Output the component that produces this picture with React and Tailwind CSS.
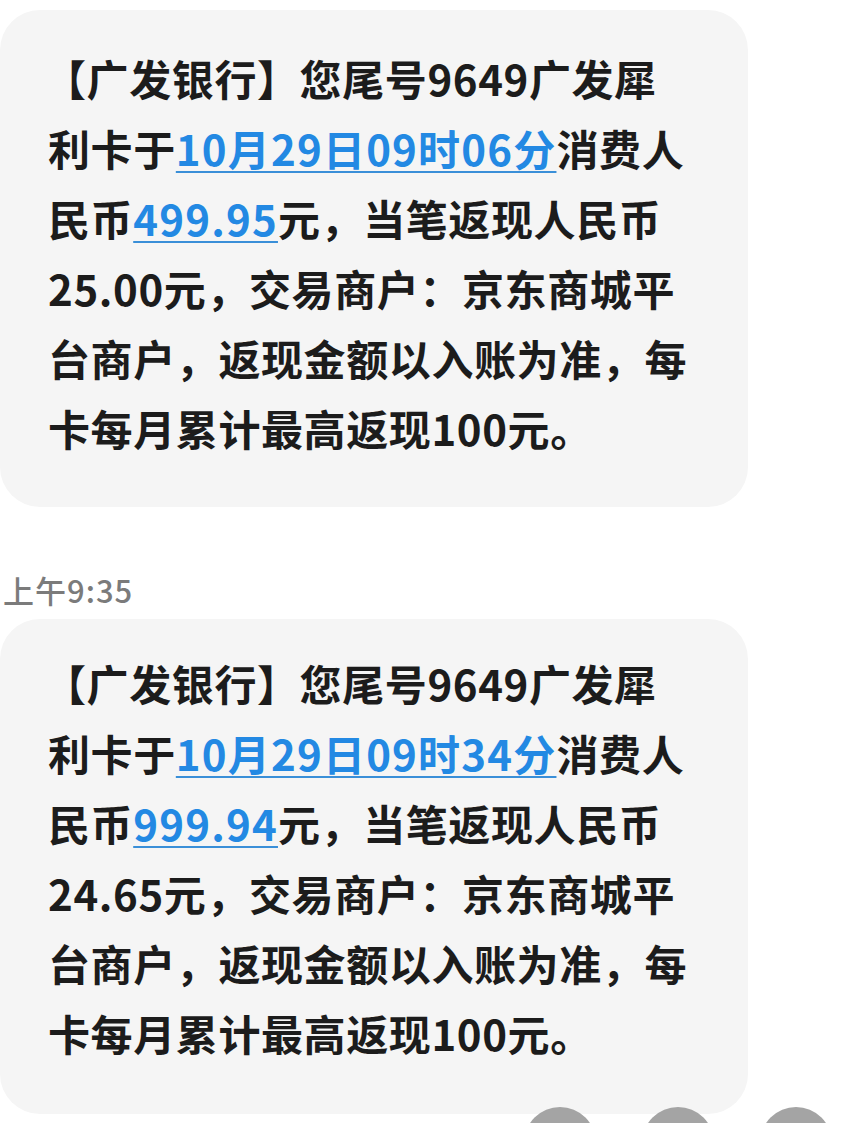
const FONT = "font-['Noto_Sans_CJK_SC','Noto_Sans',sans-serif]";

const messages = [
  {
    time: null,
    pad: "pt-[33px] pb-[44px]",
    date: "10月29日09时06分",
    amount: "499.95",
    cashback: "25.00",
  },
  {
    time: "上午9:35",
    pad: "pt-[29px] pb-[46px]",
    date: "10月29日09时34分",
    amount: "999.94",
    cashback: "24.65",
  },
];

function Link({ children }) {
  return (
    <span className="text-[#2389e3] tracking-[1.2px] underline decoration-[#3a8fd8] decoration-2 underline-offset-[5px]">
      {children}
    </span>
  );
}

function Bubble({ msg }) {
  return (
    <div
      className={`w-[748px] bg-[#f5f5f5] rounded-[40px] pl-[48px] ${msg.pad} text-[42px] leading-[70px] font-bold text-[#1c1c1c] whitespace-nowrap tracking-[0.6px]`}
    >
      <div className="-ml-[4px]">【广发银行】您尾号9649广发犀</div>
      <div>
        利卡于<Link>{msg.date}</Link>消费人
      </div>
      <div>
        民币<Link>{msg.amount}</Link>元，当笔返现人民币
      </div>
      <div>{msg.cashback}元，交易商户：京东商城平</div>
      <div>台商户，返现金额以入账为准，每</div>
      <div>卡每月累计最高返现100元。</div>
    </div>
  );
}

export default function App() {
  return (
    <div className={`relative w-[842px] h-[1123px] overflow-hidden bg-white ${FONT}`}>
      <div className="pt-[10px]">
        <Bubble msg={messages[0]} />

        <div className="mt-[63px] mb-[9px] pl-[3px] text-[31px] leading-[40px] font-medium tracking-[1px] text-[#7b7b7b]">
          {messages[1].time}
        </div>

        <Bubble msg={messages[1]} />
      </div>

      {/* floating buttons */}
      <div className="absolute left-[524px] top-[1107px] flex gap-[46px]">
        <div className="w-[72px] h-[72px] rounded-full bg-[#a4a4a4]" />
        <div className="w-[72px] h-[72px] rounded-full bg-[#a4a4a4]" />
        <div className="w-[72px] h-[72px] rounded-full bg-[#a4a4a4]" />
      </div>
    </div>
  );
}
